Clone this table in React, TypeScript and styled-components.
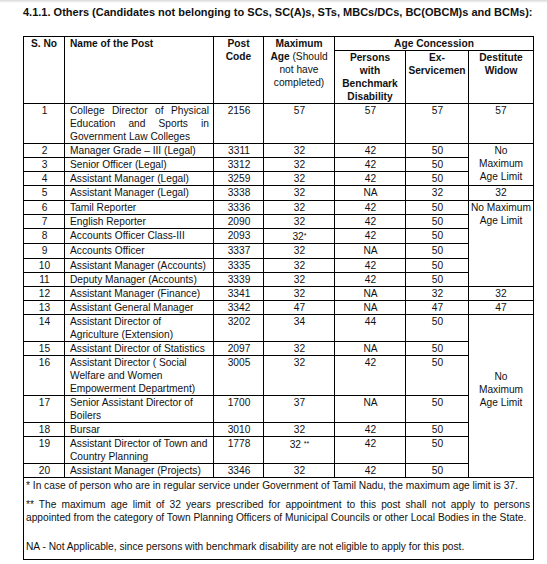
import React from 'react';
import styled, { createGlobalStyle } from 'styled-components';

type Widow = { lines: string[]; span?: number; middle?: boolean };

type Row = {
    no: number;
    name: string[];
    justify?: boolean;
    code: string;
    max: string;
    star?: string;
    pwd: string;
    ex: string;
    widow?: Widow;
    tall?: boolean;
};

const rows: Row[] = [
    {
        no: 1,
        name: ['College Director of Physical', 'Education and Sports in', 'Government Law Colleges'],
        justify: true,
        code: '2156',
        max: '57',
        pwd: '57',
        ex: '57',
        widow: { lines: ['57'] },
    },
    { no: 2, name: ['Manager Grade \u2013 III (Legal)'], code: '3311', max: '32', pwd: '42', ex: '50', widow: { lines: ['No', 'Maximum', 'Age Limit'], span: 3 } },
    { no: 3, name: ['Senior Officer (Legal)'], code: '3312', max: '32', pwd: '42', ex: '50' },
    { no: 4, name: ['Assistant Manager (Legal)'], code: '3259', max: '32', pwd: '42', ex: '50' },
    { no: 5, name: ['Assistant Manager (Legal)'], code: '3338', max: '32', pwd: 'NA', ex: '32', widow: { lines: ['32'] }, tall: true },
    { no: 6, name: ['Tamil Reporter'], code: '3336', max: '32', pwd: '42', ex: '50', widow: { lines: ['No Maximum', 'Age Limit'], span: 6 } },
    { no: 7, name: ['English Reporter'], code: '2090', max: '32', pwd: '42', ex: '50' },
    { no: 8, name: ['Accounts Officer Class-III'], code: '2093', max: '32', star: '*', pwd: '42', ex: '50' },
    { no: 9, name: ['Accounts Officer'], code: '3337', max: '32', pwd: 'NA', ex: '50', tall: true },
    { no: 10, name: ['Assistant Manager (Accounts)'], code: '3335', max: '32', pwd: '42', ex: '50' },
    { no: 11, name: ['Deputy Manager (Accounts)'], code: '3339', max: '32', pwd: '42', ex: '50' },
    { no: 12, name: ['Assistant Manager (Finance)'], code: '3341', max: '32', pwd: 'NA', ex: '32', widow: { lines: ['32'] } },
    { no: 13, name: ['Assistant General Manager'], code: '3342', max: '47', pwd: 'NA', ex: '47', widow: { lines: ['47'] } },
    {
        no: 14,
        name: ['Assistant Director of', 'Agriculture (Extension)'],
        code: '3202',
        max: '34',
        pwd: '44',
        ex: '50',
        widow: { lines: ['No', 'Maximum', 'Age Limit'], span: 7, middle: true },
    },
    { no: 15, name: ['Assistant Director of Statistics'], code: '2097', max: '32', pwd: 'NA', ex: '50' },
    { no: 16, name: ['Assistant Director ( Social', 'Welfare and Women', 'Empowerment Department)'], code: '3005', max: '32', pwd: '42', ex: '50' },
    { no: 17, name: ['Senior Assistant Director of', 'Boilers'], code: '1700', max: '37', pwd: 'NA', ex: '50' },
    { no: 18, name: ['Bursar'], code: '3010', max: '32', pwd: '42', ex: '50' },
    { no: 19, name: ['Assistant Director of Town and', 'Country Planning'], code: '1778', max: '32 ', star: '**', pwd: '42', ex: '50' },
    { no: 20, name: ['Assistant Manager (Projects)'], code: '3346', max: '32', pwd: '42', ex: '50' },
];

const App = () => (
    <>
        <GlobalStyle />
        <Page>
            <Title>4.1.1. Others (Candidates not belonging to SCs, SC(A)s, STs, MBCs/DCs, BC(OBCM)s and BCMs):</Title>
            <Table>
                <colgroup>
                    <col style={{ width: 41 }} />
                    <col style={{ width: 149 }} />
                    <col style={{ width: 50 }} />
                    <col style={{ width: 71 }} />
                    <col style={{ width: 71 }} />
                    <col style={{ width: 63 }} />
                    <col style={{ width: 65 }} />
                </colgroup>
                <thead>
                    <tr>
                        <Th rowSpan={2}>S. No</Th>
                        <Th rowSpan={2} $align="left">Name of the Post</Th>
                        <Th rowSpan={2}>Post<br />Code</Th>
                        <Th rowSpan={2}>
                            Maximum<br />Age <Plain>(Should<br />not have<br />completed)</Plain>
                        </Th>
                        <Th colSpan={3}>Age Concession</Th>
                    </tr>
                    <tr>
                        <Th>Persons<br />with<br />Benchmark<br />Disability</Th>
                        <Th>Ex-<br />Servicemen</Th>
                        <Th>Destitute<br />Widow</Th>
                    </tr>
                </thead>
                <tbody>
                    {rows.map((r) => (
                        <BodyRow key={r.no} $tall={r.tall}>
                            <Td>{r.no}</Td>
                            <Td $align="left">
                                {r.name.map((line, i) => (
                                    <Line key={i} $justify={!!r.justify && i < r.name.length - 1}>
                                        {line}
                                    </Line>
                                ))}
                            </Td>
                            <Td>{r.code}</Td>
                            <Td>
                                {r.max}
                                {r.star && <Star>{r.star}</Star>}
                            </Td>
                            <Td>{r.pwd}</Td>
                            <Td>{r.ex}</Td>
                            {r.widow && (
                                <WidowCell rowSpan={r.widow.span} $middle={r.widow.middle}>
                                    {r.widow.lines.map((l, i) => (
                                        <Line key={i}>{l}</Line>
                                    ))}
                                </WidowCell>
                            )}
                        </BodyRow>
                    ))}
                </tbody>
                <tfoot>
                    <tr>
                        <NoteCell colSpan={7}>
                            <Note>* In case of person who are in regular service under Government of Tamil Nadu, the maximum age limit is 37.</Note>
                            <Note $gap={6}>
                                <Line $justify>** The maximum age limit of 32 years prescribed for appointment to this post shall not apply to persons</Line>
                                <Line>appointed from the category of Town Planning Officers of Municipal Councils or other Local Bodies in the State.</Line>
                            </Note>
                            <Note $gap={16}>NA - Not Applicable, since persons with benchmark disability are not eligible to apply for this post.</Note>
                        </NoteCell>
                    </tr>
                </tfoot>
            </Table>
        </Page>
    </>
);

const GlobalStyle = createGlobalStyle`
  body {
    margin: 0;
    background: linear-gradient(to bottom, #d9d9d9 0, #ffffff 3px) no-repeat #fff;
    font-family: 'Liberation Sans', Arial, sans-serif;
    color: #111;
  }
`;

const Page = styled('main')`
    padding: 6px 0 0 23px;
    width: 511px;
`;

const Title = styled('h1')`
    font-size: 11px;
    font-weight: bold;
    line-height: 13px;
    margin: 0 0 17px 0;
    white-space: nowrap;
`;

const Table = styled('table')`
    border-collapse: collapse;
    table-layout: fixed;
    width: 511px;
    font-size: 10.2px;
    line-height: 13px;

    td, th {
        border: 1px solid #000;
    }
`;

const Th = styled('th')<{ $align?: string }>`
    text-align: ${(p) => p.$align || 'center'};
    vertical-align: top;
    font-weight: bold;
    padding: ${(p) => (p.$align === 'left' ? '0 4px 0 5px' : '0 1px')};
`;

const Plain = styled('span')`
    font-weight: normal;
`;

const Td = styled('td')<{ $align?: string }>`
    text-align: ${(p) => p.$align || 'center'};
    vertical-align: top;
    padding: 0 4px 0 5px;
    white-space: nowrap;
`;

const BodyRow = styled('tr')<{ $tall?: boolean }>`
    & > td {
        padding-bottom: ${(p) => (p.$tall ? '1px' : '0')};
    }
`;

const WidowCell = styled(Td)<{ $middle?: boolean }>`
    vertical-align: ${(p) => (p.$middle ? 'middle' : 'top')};
    && {
        padding: ${(p) => (p.$middle ? '0 2px 14px' : '0 2px')};
    }
`;

const Line = styled('span')<{ $justify?: boolean }>`
    display: block;
    white-space: ${(p) => (p.$justify ? 'normal' : 'nowrap')};
    text-align: ${(p) => (p.$justify ? 'justify' : 'inherit')};
    text-align-last: ${(p) => (p.$justify ? 'justify' : 'auto')};
`;

const Star = styled('span')`
    font-size: 7px;
    vertical-align: 2px;
`;

const NoteCell = styled('td')`
    padding: 1px 3px 6px 2px;
    text-align: left;
`;

const Note = styled('p')<{ $gap?: number }>`
    margin: ${(p) => p.$gap || 0}px 0 0 0;
`;

export default App;
